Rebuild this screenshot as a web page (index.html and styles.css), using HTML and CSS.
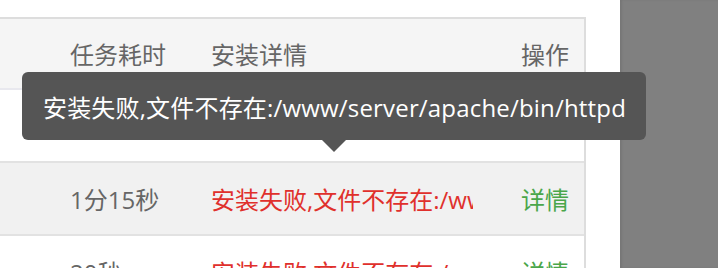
FILE: index.html
```html
<!DOCTYPE html>
<html lang="zh-CN">

<head>
    <meta charset="UTF-8">
    <meta name="viewport" content="width=device-width, initial-scale=1.0">
    <title>安装记录</title>
    <link rel="stylesheet" href="styles.css">
</head>

<body>
    <div class="page">
        <div class="main">
            <div class="table">
                <div class="row head">
                    <div class="cell">任务耗时</div>
                    <div class="cell">安装详情</div>
                    <div class="cell">操作</div>
                </div>
                <div class="row">
                    <div class="cell"></div>
                    <div class="cell"></div>
                    <div class="cell"></div>
                </div>
                <div class="row odd">
                    <div class="cell">1分15秒</div>
                    <div class="cell fail">安装失败,文件不存在:/www/server/apache/bin/httpd</div>
                    <div class="cell"><a class="link">详情</a></div>
                </div>
                <div class="row">
                    <div class="cell">20秒</div>
                    <div class="cell fail">安装失败,文件不存在:/www/server/nginx/sbin/nginx</div>
                    <div class="cell"><a class="link">详情</a></div>
                </div>
            </div>
            <!-- 悬浮提示 -->
            <div class="tooltip">安装失败,文件不存在:/www/server/apache/bin/httpd</div>
        </div>
        <div class="side"></div>
    </div>
</body>

</html>
```

FILE: styles.css
```css
/* 通用样式 */
html,
body {
    margin: 0;
    height: 100%;
    overflow: hidden;
}

body {
    font-family: "Open Sans", "Noto Sans CJK SC", sans-serif;
    font-size: 24px;
    color: #666;
    background-color: #fff;
}

.page {
    display: flex;
    height: 100%;
}

.main {
    position: relative;
    flex: 1;
    padding-top: 17px;
}

.side {
    width: 98px;
    background-color: #808080;
    box-shadow: inset 2px 0 2px rgba(0, 0, 0, 0.08);
}

/* 表格 */
.table {
    width: 584px;
    border-top: 2px solid #ddd;
    border-right: 2px solid #ddd;
}

.row {
    display: grid;
    grid-template-columns: 141px 262px 1fr;
    height: 71px;
    padding-left: 70px;
    border-bottom: 2px solid #e2e2e2;
    align-items: center;
}

.head {
    height: 69px;
    background-color: #f5f5f5;
    border-bottom-color: #e8e8ee;
}

.odd {
    background-color: #f1f1f1;
}

.cell {
    white-space: nowrap;
    overflow: hidden;
}

.cell:last-child {
    padding-left: 48px;
}

.fail {
    color: #e0302c;
}

.link {
    color: #4aa64a;
    cursor: pointer;
}

/* 提示框 */
.tooltip {
    position: absolute;
    left: 22px;
    top: 72px;
    height: 68px;
    padding: 0 20px 0 21px;
    display: flex;
    align-items: center;
    white-space: nowrap;
    letter-spacing: 0.18px;
    color: #fff;
    background-color: #555;
    border-radius: 6px;
}

.tooltip::after {
    content: "";
    position: absolute;
    left: 300px;
    top: 100%;
    border: 12px solid transparent;
    border-top-color: #555;
    border-bottom: 0;
}
```
